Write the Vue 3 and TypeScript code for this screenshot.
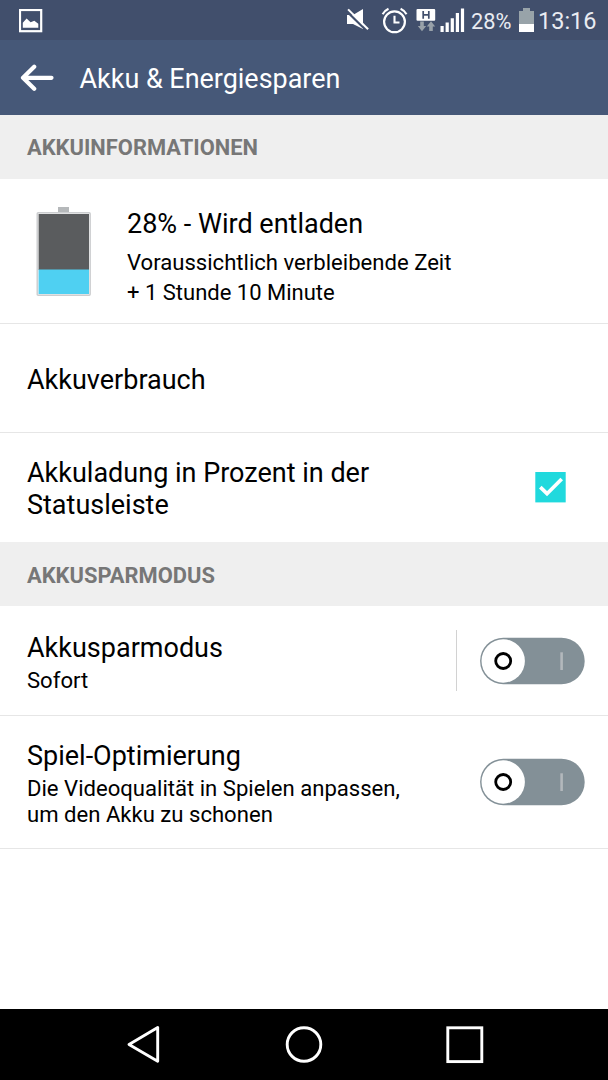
<script setup lang="ts">
import { ref } from 'vue'

interface ToggleRow {
  key: string
  title: string
  lines: string[]
  divided: boolean
  on: boolean
}

const level = 28
const showPercent = ref(true)
const rows = ref<ToggleRow[]>([
  { key: 'saver', title: 'Akkusparmodus', lines: ['Sofort'], divided: true, on: false },
  {
    key: 'game',
    title: 'Spiel-Optimierung',
    lines: ['Die Videoqualität in Spielen anpassen,', 'um den Akku zu schonen'],
    divided: false,
    on: false,
  },
])
</script>

<template>
  <div class="screen">
    <header class="status">
      <svg class="s-picture" width="24" height="24" viewBox="0 0 24 24">
        <rect x="1" y="1" width="21.2" height="21.2" fill="none" stroke="#fff" stroke-width="2.2" />
        <path d="M3.8 18.7V13.7L7.6 9.5L11.6 13.3L15.3 11.7L19.3 14.7V18.7Z" fill="#fff" />
      </svg>
      <svg class="s-icons" width="124" height="40" viewBox="0 0 124 40">
        <path d="M2 15H8L18 9V29L8 24H2Z" fill="#fff" />
        <path d="M1.4 11L21.4 30.5" stroke="#414f6c" stroke-width="2.4" />
        <path d="M3.1 9.4L23.1 29.2" stroke="#fff" stroke-width="2" />
        <circle cx="49.5" cy="21.8" r="10.4" fill="none" stroke="#fff" stroke-width="2.2" />
        <path d="M49.5 15.8V22.5H54.5M37.6 14.3Q39.5 10.7 43.5 8.8M55.6 8.8Q59.7 10.7 61.5 14.3" fill="none" stroke="#fff" stroke-width="2.1" />
        <rect x="71.5" y="9" width="18.7" height="11.8" rx="1" fill="#fff" />
        <path d="M78.2 11V18.8M83.8 11V18.8M78 14.9H84" fill="none" stroke="#414f6c" stroke-width="1.7" />
        <path d="M75.2 21.5H78.8V26H81.2L77 31.2L72.8 26H75.2ZM84.2 31V26.5H81.8L86 21.3L90.2 26.5H87.8V31Z" fill="#98a1a9" />
        <path d="M95.5 26H98.7V32H95.5ZM100.6 22.5H103.8V32H100.6ZM105.7 18.2H108.9V32H105.7ZM110.8 13H114V32H110.8ZM115.9 8.5H119.1V32H115.9Z" fill="#fff" />
      </svg>
      <span class="s-percent">{{ level }}%</span>
      <svg class="s-battery" width="16" height="24" viewBox="0 0 16 24">
        <path d="M4 0H11V3H15V24H0V3H4Z" fill="#98a3a9" />
        <rect y="16" width="15" height="8" fill="#fff" />
      </svg>
      <span class="s-clock">13:16</span>
    </header>

    <div class="appbar">
      <svg class="back" width="34" height="28" viewBox="0 0 34 28">
        <path d="M14.2 2.8L3 13.8L14.2 24.8M3.5 13.8H31.5" fill="none" stroke="#fff" stroke-width="4.2" stroke-linecap="round" stroke-linejoin="round" />
      </svg>
      <h1>Akku &amp; Energiesparen</h1>
    </div>

    <main>
      <h2>AKKUINFORMATIONEN</h2>
      <section class="row info">
        <svg class="battery" width="56" height="90" viewBox="0 0 56 90">
          <rect x="22" y="0" width="11" height="6" fill="#b5b8ba" />
          <rect x="1.2" y="5.7" width="53" height="82.6" rx="1" fill="#f4f4f4" stroke="#cbcdcf" stroke-width="1.4" />
          <rect x="2.6" y="7" width="50.4" height="56" fill="#5a5c5e" />
          <rect x="2.6" y="62.5" width="50.4" height="24.5" fill="#4fd0f2" />
        </svg>
        <div class="text">
          <div class="title">{{ level }}% - Wird entladen</div>
          <div class="sub">Voraussichtlich verbleibende Zeit</div>
          <div class="sub">+ 1 Stunde 10 Minute</div>
        </div>
      </section>
      <section class="row usage"><div class="title">Akkuverbrauch</div></section>
      <section class="row percent" @click="showPercent = !showPercent">
        <div class="title">Akkuladung in Prozent in der<br>Statusleiste</div>
        <svg class="check" width="31" height="31" viewBox="0 0 31 31">
          <rect x=".3" width="30.4" height="30.4" fill="#20d9dd" />
          <path v-if="showPercent" d="M5.3 15.2L12 21.7L26.7 7" fill="none" stroke="#fff" stroke-width="3.7" />
        </svg>
      </section>

      <h2 class="second">AKKUSPARMODUS</h2>
      <section v-for="row in rows" :key="row.key" class="row toggle-row" :class="row.key">
        <div class="text">
          <div class="title">{{ row.title }}</div>
          <div v-for="line in row.lines" :key="line" class="sub">{{ line }}</div>
        </div>
        <div v-if="row.divided" class="divider"></div>
        <svg class="switch" width="105" height="48" viewBox="0 0 105 48" @click="row.on = !row.on">
          <rect x=".1" y=".7" width="104.6" height="46.6" rx="23.3" fill="#839097" />
          <path d="M81.6 15.3V33" stroke="#b3b8bc" stroke-width="2.6" />
          <g :transform="row.on ? 'translate(58 0)' : undefined">
            <circle cx="23.2" cy="24" r="21.7" fill="#fff" />
            <circle cx="23.2" cy="24" r="7.5" fill="none" stroke="#000" stroke-width="2.8" />
          </g>
        </svg>
      </section>
    </main>

    <nav>
      <svg width="608" height="71" viewBox="0 0 608 71" fill="none" stroke="#fff" stroke-width="2.9">
        <path d="M129 35.5L157.7 18.6V52.2Z" stroke-linejoin="round" />
        <circle cx="304" cy="35.5" r="16.8" />
        <rect x="447.8" y="18.8" width="34" height="33.8" />
      </svg>
    </nav>
  </div>
</template>

<style>
body { margin: 0; background: #fff; }
</style>

<style scoped>
.screen {
  width: 608px;
  height: 1080px;
  display: flex;
  flex-direction: column;
  overflow: hidden;
  background: #fff;
  color: #000;
  font-family: Roboto, "Liberation Sans", sans-serif;
}
svg { display: block; flex: none; }
.status {
  height: 40px;
  flex: none;
  display: flex;
  align-items: flex-start;
  background: #414f6c;
  color: #e9ecf2;
}
.s-picture { margin: 9px 0 0 19px; }
.s-icons { margin-left: 302px; }
.s-percent { width: 48px; margin-left: 2px; font-size: 21.8px; line-height: 43px; white-space: nowrap; }
.s-battery { margin-top: 8px; }
.s-clock { margin-left: 3px; font-size: 23.5px; line-height: 43px; white-space: nowrap; }
.appbar {
  height: 75px;
  flex: none;
  box-sizing: border-box;
  display: flex;
  align-items: center;
  background: #465878;
}
.back { margin-left: 20px; }
h1 { margin: 3.5px 0 0 25.5px; color: #fff; font-size: 26.95px; font-weight: 400; line-height: 32px; white-space: nowrap; }
main { flex: 1; }
h2 {
  height: 64px;
  margin: 0;
  padding-left: 27px;
  background: #efefef;
  color: #777;
  font-size: 21.9px;
  font-weight: 700;
  line-height: 66px;
}
h2.second { line-height: 67px; }
.row { box-sizing: border-box; display: flex; border-bottom: 1px solid #e6e6e6; padding-left: 27px; }
.title { font-size: 27px; line-height: 32px; white-space: nowrap; }
.sub { font-size: 22.1px; white-space: nowrap; }
.info { height: 145px; padding-left: 36px; }
.battery { margin-top: 28px; }
.info .text { margin: 29px 0 0 35px; }
.info .title { margin-bottom: 8px; }
.info .sub { line-height: 29.5px; }
.info .sub + .sub { font-size: 22px; }
.usage { height: 109px; align-items: center; }
.usage .title { padding-top: 3px; }
.percent { height: 109px; justify-content: space-between; border-bottom: 0; }
.percent .title { margin-top: 24px; }
.check { margin: 39px 42px 0 0; }
.toggle-row .text { flex: 1; }
.toggle-row .title { margin-bottom: 2.5px; }
.toggle-row .sub { line-height: 26px; }
.saver { height: 110px; }
.saver .text { margin-top: 26px; }
.game { height: 133px; }
.game .text { margin-top: 24px; }
.divider { width: 1px; height: 61px; margin: 24px 23px 0 0; background: #d2d2d2; }
.switch { margin: 31px 23px 0 0; }
.game .switch { margin-top: 42px; }
nav { height: 71px; flex: none; background: #000; }
</style>
